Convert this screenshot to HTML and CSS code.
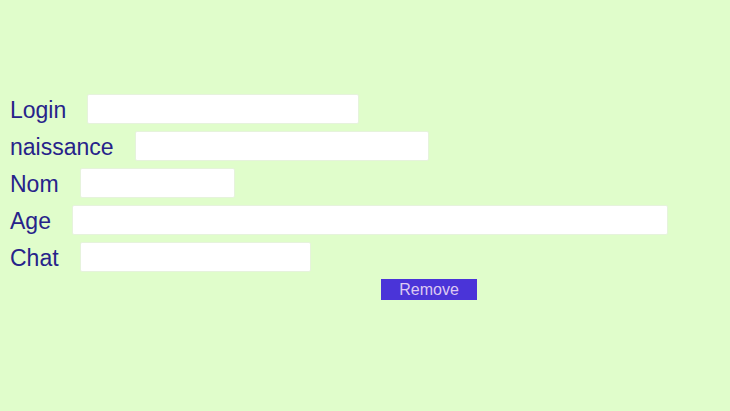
FILE: index.html
```html
<!DOCTYPE html>
<html>
<head>
<meta charset="utf-8">
<link rel="stylesheet" href="styles.css">
</head>
<body>
<form class="form">
  <div class="row"><label class="label">Login</label><input class="field w-login" type="text"></div>
  <div class="row"><label class="label">naissance</label><input class="field w-naissance" type="text"></div>
  <div class="row"><label class="label">Nom</label><input class="field w-nom" type="text"></div>
  <div class="row"><label class="label">Age</label><input class="field w-age" type="text"></div>
  <div class="row"><label class="label">Chat</label><input class="field w-chat" type="text"></div>
  <div class="actions"><button class="btn" type="button">Remove</button></div>
</form>
</body>
</html>
```
FILE: styles.css
```css
html, body {
  margin: 0;
  padding: 0;
  background: #e0fdcb;
  width: 730px;
  height: 411px;
  overflow: hidden;
}
.form {
  padding: 94px 0 0 10px;
  display: flex;
  flex-direction: column;
  gap: 7px;
  font-family: "Liberation Sans", Arial, sans-serif;
}
.row {
  display: flex;
  align-items: center;
  gap: 21px;
  height: 30px;
}
.label {
  font-size: 23px;
  color: #27238a;
  line-height: 30px;
  padding-top: 2px;
}
.field {
  box-sizing: border-box;
  height: 30px;
  margin: 0;
  border: 1px solid #e6f3dc;
  border-radius: 2px;
  background: #ffffff;
  outline: none;
  padding: 0 4px;
}
.w-login { width: 272px; }
.w-naissance { width: 294px; }
.w-nom { width: 155px; }
.w-age { width: 596px; }
.w-chat { width: 231px; }
.actions {
  display: flex;
  padding-left: 371px;
}
.btn {
  width: 96px;
  height: 21px;
  border: none;
  border-radius: 0;
  background: #4a34d8;
  color: #ddc9f2;
  font-family: "Liberation Sans", Arial, sans-serif;
  font-size: 16px;
  line-height: 21px;
  padding: 0;
}
```
